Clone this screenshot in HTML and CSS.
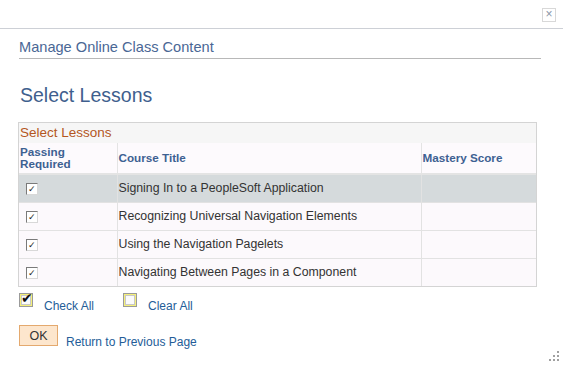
FILE: index.html
```html
<!DOCTYPE html>
<html lang="en">
<head>
    <meta charset="UTF-8">
    <title>Select Lessons</title>
    <link rel="stylesheet" href="styles.css">
</head>
<body>

<div class="top_bar">
    <span class="btn_close">&times;</span>
</div>

<div class="page">
    <div class="page_title">Manage Online Class Content</div>

    <h1 class="page_head">Select Lessons</h1>

    <div class="grid">
        <div class="grid_title">Select Lessons</div>
        <table>
            <tr class="grid_head">
                <th class="col_pass">Passing<br>Required</th>
                <th class="col_title">Course Title</th>
                <th class="col_score">Mastery Score</th>
            </tr>
            <tr class="row_active">
                <td><span class="chk">&#10003;</span></td>
                <td>Signing In to a PeopleSoft Application</td>
                <td></td>
            </tr>
            <tr>
                <td><span class="chk">&#10003;</span></td>
                <td>Recognizing Universal Navigation Elements</td>
                <td></td>
            </tr>
            <tr>
                <td><span class="chk">&#10003;</span></td>
                <td>Using the Navigation Pagelets</td>
                <td></td>
            </tr>
            <tr>
                <td><span class="chk">&#10003;</span></td>
                <td>Navigating Between Pages in a Component</td>
                <td></td>
            </tr>
        </table>
    </div>

    <div class="grid_actions">
        <span class="act_icon"><span class="act_mark">&#10004;</span></span>
        <a href="#" class="act_link">Check All</a>
        <span class="act_icon"></span>
        <a href="#" class="act_link">Clear All</a>
    </div>

    <div class="page_buttons">
        <button class="btn_ok">OK</button>
        <a href="#" class="return_link">Return to Previous Page</a>
    </div>
</div>

<div class="grip">
    <svg width="12" height="12" viewBox="0 0 12 12">
        <rect x="8" y="0" width="2" height="2" fill="#a0a0a0"/>
        <rect x="4" y="4" width="2" height="2" fill="#a0a0a0"/>
        <rect x="8" y="4" width="2" height="2" fill="#a0a0a0"/>
        <rect x="0" y="8" width="2" height="2" fill="#a0a0a0"/>
        <rect x="4" y="8" width="2" height="2" fill="#a0a0a0"/>
        <rect x="8" y="8" width="2" height="2" fill="#a0a0a0"/>
    </svg>
</div>

</body>
</html>
```

FILE: styles.css
```css
* {
    margin: 0;
    padding: 0;
    box-sizing: border-box;
}

body {
    font-family: "Liberation Sans", Arial, sans-serif;
    font-size: 12px;
    color: #333333;
    background-color: white;
    width: 563px;
    height: 365px;
    position: relative;
    overflow: hidden;
}

.top_bar {
    height: 29px;
    border-bottom: 1px solid #cdd0d6;
    display: flex;
    justify-content: flex-end;
    padding: 8px 7px 0 0;
}

.btn_close {
    width: 14px;
    height: 14px;
    border: 1px solid #d8d8d8;
    color: #8a96a8;
    font-size: 12px;
    line-height: 11px;
    text-align: center;
}

.page {
    padding-left: 19px;
}

.page_title {
    width: 522px;
    margin-top: 10px;
    padding-bottom: 3px;
    border-bottom: 1px solid #b8b8b8;
    color: #4a6795;
    font-size: 14.6px;
}

.page_head {
    margin-top: 25px;
    padding-left: 1px;
    color: #3f5f8e;
    font-size: 19.5px;
    font-weight: normal;
    height: 38px;
}

.grid {
    width: 519px;
    margin-left: -1px;
    border: 1px solid #d4d4d4;
}

.grid_title {
    height: 20px;
    background-color: #f6f6f6;
    color: #b4561e;
    font-size: 13.5px;
    line-height: 19px;
    padding-left: 1px;
}

table {
    width: 100%;
    border-collapse: collapse;
}

th {
    background-color: #fdfafd;
    color: #3d6192;
    font-size: 11.7px;
    font-weight: bold;
    text-align: left;
    height: 31px;
    padding: 1px 1px;
    line-height: 12px;
    border: 1px solid #e4e4e4;
    border-top: none;
    border-bottom: 2px solid #e4e4e4;
}

.col_pass {
    width: 98px;
    vertical-align: top;
    padding-top: 3px;
}

.col_score {
    width: 115px;
}

td {
    height: 28px;
    background-color: #fcf9fc;
    border: 1px solid #e2e2e2;
    padding-left: 1px;
    color: #333333;
    font-size: 12.3px;
}

tr th:first-child,
tr td:first-child {
    border-left: none;
}

tr th:last-child,
tr td:last-child {
    border-right: none;
}

tr:last-child td {
    border-bottom: none;
}

.row_active td {
    background-color: #d5dadc;
}

.chk {
    display: inline-block;
    width: 12px;
    height: 12px;
    margin-left: 6px;
    border: 1px solid #7a7a7a;
    border-right-color: #d8d8d8;
    border-bottom-color: #d8d8d8;
    background-color: white;
    font-size: 9px;
    line-height: 10px;
    text-align: center;
    color: #222222;
    vertical-align: middle;
}

.grid_actions {
    display: flex;
    align-items: flex-start;
    height: 38px;
    padding-top: 10px;
}

.act_icon {
    width: 14px;
    height: 14px;
    margin-top: -4px;
    border: 1px solid #9a9a9a;
    box-shadow: inset 0 0 0 1px #f5f07a, inset 0 0 0 2px #c8c8c8;
    background-color: #fbfbfb;
    position: relative;
    margin-right: 11px;
}

.act_mark {
    position: absolute;
    left: 1px;
    top: -4px;
    font-size: 14px;
    color: #111111;
}

.act_link {
    color: #245d98;
    text-decoration: none;
    font-size: 12px;
    margin-top: 2px;
    margin-right: 29px;
}

.page_buttons {
    display: flex;
    align-items: flex-end;
}

.btn_ok {
    width: 39px;
    height: 21px;
    background-color: #fde6cd;
    border: 1px solid #e4a96e;
    font-family: "Liberation Sans", Arial, sans-serif;
    font-size: 12.5px;
    color: #333333;
    margin-right: 8px;
}

.return_link {
    color: #245d98;
    text-decoration: none;
    font-size: 12px;
    margin-bottom: -3px;
}

.grip {
    position: absolute;
    right: 2px;
    bottom: 2px;
    width: 12px;
    height: 12px;
}
```
